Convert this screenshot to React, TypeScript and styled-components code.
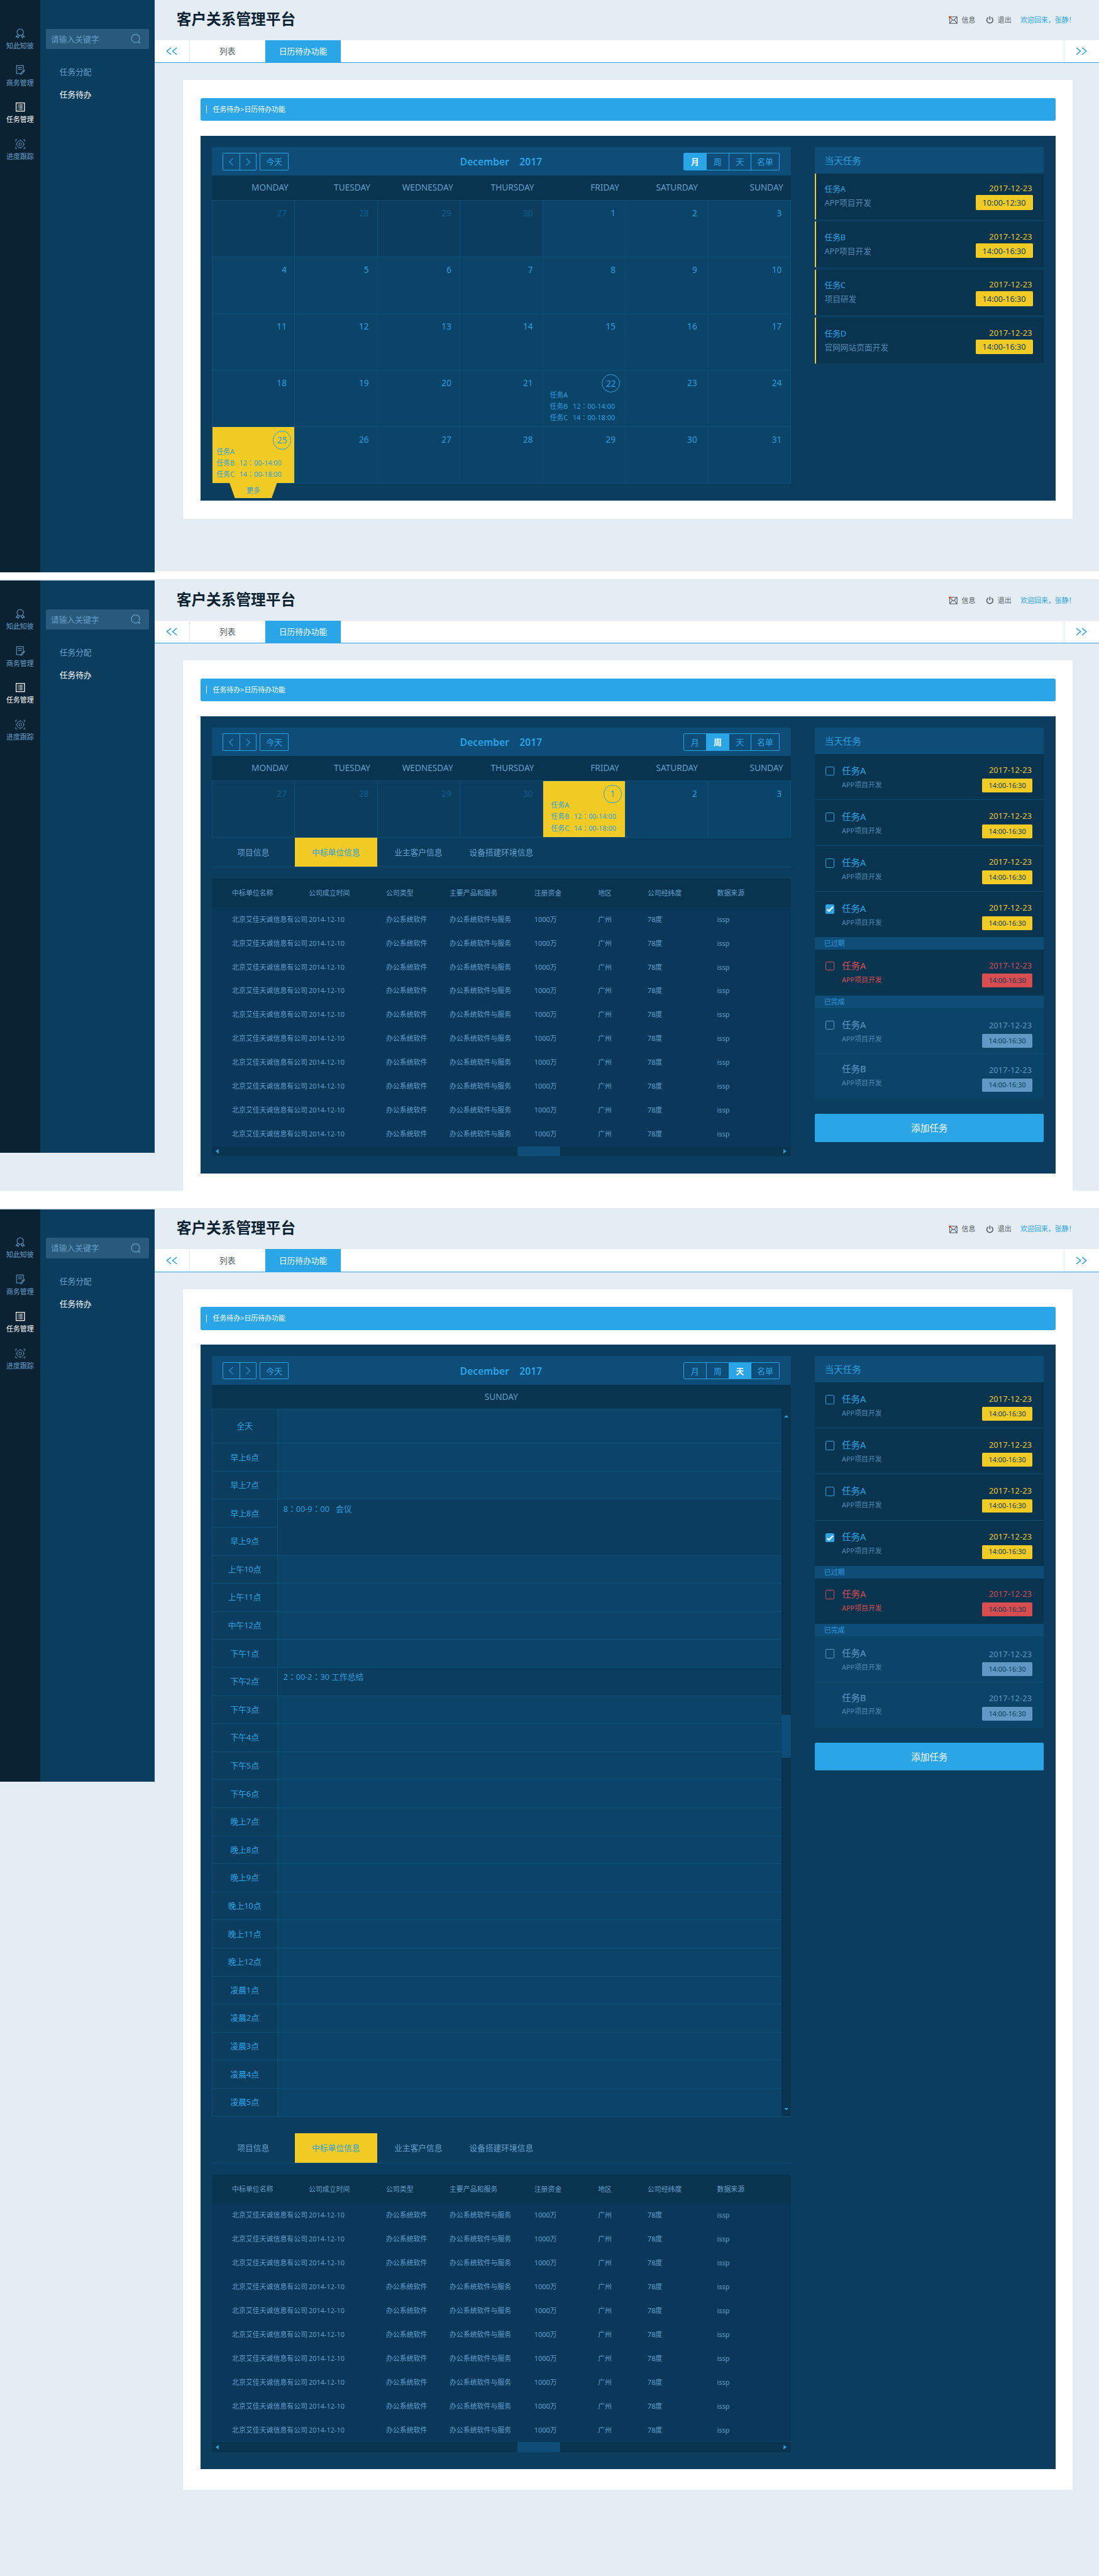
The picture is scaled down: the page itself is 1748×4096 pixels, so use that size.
import React from "react";
import styled, { createGlobalStyle, css } from "styled-components";

const c = {
  page: "#e4edf4",
  rail: "#0a2231",
  navy: "#0b3d5e",
  head: "#0d4d78",
  deep: "#09344f",
  cell: "#0b4469",
  line: "#0e4f7a",
  row: "#09385a",
  blue: "#2aa5e7",
  num: "#2a9fdf",
  muted: "#659fca",
  done: "#5f99c4",
  soft: "#5388b1",
  yellow: "#f3cb25",
  red: "#d94c4f",
};

const Global = createGlobalStyle`
  html, body { margin: 0; padding: 0; background: #fff; }
  * { box-sizing: border-box; }
  body { font-family: "Noto Sans", "Noto Sans CJK SC", sans-serif; }
`;

const Viewport = styled.div`
  width: 1748px;
  height: 4096px;
  overflow: hidden;
`;

const Board = styled.div`
  zoom: 0.9103;
  width: 1920.3px;
  height: 4500px;
  display: flex;
  flex-direction: column;
  background: #fff;
  font-size: 14px;
  line-height: 20px;
  white-space: nowrap;
`;

const Screen = styled.section<{ $h: number; $gap?: number; $top?: number }>`
  flex: none;
  display: flex;
  align-items: flex-start;
  height: ${(p) => p.$h}px;
  margin-top: ${(p) => p.$gap || 0}px;
  padding-top: ${(p) => p.$top || 0}px;
  background: ${c.page};
`;

/* ---------- left rail ---------- */

const Rail = styled.nav`
  width: 70px;
  height: 1000px;
  flex: none;
  background: ${c.rail};
  padding-top: 49px;
  display: flex;
  flex-direction: column;
`;

const RailItem = styled.div<{ $active?: boolean }>`
  height: 64.7px;
  display: flex;
  flex-direction: column;
  align-items: center;
  gap: 3px;
  font-size: 12px;
  line-height: 20px;
  color: ${(p) => (p.$active ? "#fff" : c.muted)};
  svg {
    display: block;
    height: 18px;
    width: 18px;
  }
`;

const Side = styled.aside`
  width: 200px;
  height: 1000px;
  flex: none;
  background: ${c.navy};
  padding: 50px 10px 0;
`;

const Search = styled.div`
  height: 36px;
  border-radius: 3px;
  background: #295a7b;
  color: ${c.muted};
  display: flex;
  align-items: center;
  justify-content: space-between;
  padding: 0 14px 0 9px;
`;

const Menu = styled.div`
  padding: 20px 0 0 24px;
`;

const MenuItem = styled.div<{ $active?: boolean }>`
  height: 39.6px;
  display: flex;
  align-items: center;
  color: ${(p) => (p.$active ? "#fff" : c.muted)};
`;

/* ---------- top ---------- */

const Main = styled.main`
  width: 1650px;
  flex: none;
`;

const Top = styled.header`
  height: 70px;
  display: flex;
  justify-content: space-between;
  padding: 0 41px 0 38.5px;
`;

const Title = styled.h1`
  margin: 13px 0 0;
  font-size: 26px;
  line-height: 40px;
  font-weight: 700;
  color: ${c.rail};
`;

const UserBar = styled.div`
  display: flex;
  align-items: center;
  height: 70px;
  font-size: 12px;
  color: #5b6166;
  svg {
    display: block;
    margin-right: 7px;
  }
`;

const UserItem = styled.span<{ $gap?: number; $blue?: boolean }>`
  display: flex;
  align-items: center;
  margin-left: ${(p) => p.$gap || 0}px;
  color: ${(p) => (p.$blue ? c.blue : "#5b6166")};
`;

const TabBar = styled.div`
  height: 40px;
  background: #fff;
  border-bottom: 1px solid ${c.blue};
  display: flex;
`;

const Tab = styled.div<{ $w: number; $active?: boolean; $grow?: boolean }>`
  width: ${(p) => p.$w}px;
  ${(p) => p.$grow && "flex: 1;"}
  display: flex;
  align-items: center;
  justify-content: center;
  color: ${(p) => (p.$active ? "#fff" : "#555b60")};
  background: ${(p) => (p.$active ? c.blue : "#fff")};
  border-right: 2px solid ${c.page};
  &:last-child {
    border-right: 0;
  }
`;

const Panel = styled.div<{ $h: number }>`
  margin: 30px 0 0 50px;
  width: 1554px;
  height: ${(p) => p.$h}px;
  background: #fff;
  padding: 31px 30px 0;
`;

const Crumb = styled.div`
  height: 40px;
  border-radius: 3px;
  background: ${c.blue};
  color: #fff;
  font-size: 12px;
  display: flex;
  align-items: center;
  padding-left: 10px;
  gap: 10px;
  &::before {
    content: "";
    width: 2px;
    height: 14px;
    background: #fff;
  }
`;

const Workspace = styled.div<{ $h: number }>`
  margin-top: 26px;
  height: ${(p) => p.$h}px;
  background: ${c.navy};
  padding: 20px 20px 0;
  display: flex;
  align-items: flex-start;
  gap: 42px;
`;

/* ---------- calendar ---------- */

const Calendar = styled.div`
  width: 1012px;
  flex: none;
`;

const CalHead = styled.div`
  height: 50px;
  background: ${c.head};
  display: grid;
  grid-template-columns: 1fr auto 1fr;
  align-items: center;
  padding: 1px 20px 0 19px;
  color: ${c.blue};
`;

const Month = styled.div`
  font-size: 17px;
  font-weight: 600;
  letter-spacing: 0.1px;
  word-spacing: 13.5px;
`;

const HeadLeft = styled.div`
  display: flex;
  gap: 6px;
`;

const Group = styled.div<{ $end?: boolean }>`
  display: flex;
  height: 30px;
  border: 1px solid ${c.blue};
  border-radius: 2px;
  ${(p) => p.$end && "justify-self: end;"}
`;

const GroupBtn = styled.div<{ $w: number; $active?: boolean }>`
  width: ${(p) => p.$w}px;
  display: flex;
  align-items: center;
  justify-content: center;
  border-left: 1px solid ${c.blue};
  &:first-child {
    border-left: 0;
  }
  ${(p) =>
    p.$active &&
    css`
      background: ${c.blue};
      color: #fff;
      font-weight: 600;
    `}
`;

const DowBar = styled.div<{ $single?: boolean }>`
  height: 42px;
  background: ${c.deep};
  display: ${(p) => (p.$single ? "flex" : "grid")};
  grid-template-columns: repeat(7, 1fr);
  align-items: center;
  justify-content: center;
  color: ${c.muted};
  font-size: 15px;
`;

const Dow = styled.div<{ $pad: number }>`
  text-align: right;
  padding-right: ${(p) => p.$pad}px;
`;

const Days = styled.div`
  display: grid;
  grid-template-columns: repeat(7, 1fr);
  grid-auto-rows: 99px;
  border-right: 1px solid ${c.line};
  border-bottom: 1px solid ${c.line};
`;

type Tone = "dim" | "normal" | "hot";

const Day = styled.div<{ $tone: Tone; $pad: number }>`
  position: relative;
  border-left: 1px solid ${c.line};
  border-top: 1px solid ${c.line};
  background: ${(p) => (p.$tone === "dim" ? c.navy : p.$tone === "hot" ? c.yellow : c.cell)};
  color: ${(p) => (p.$tone === "dim" ? "#105d92" : c.num)};
  padding: 12px ${(p) => p.$pad}px 0 0;
  text-align: right;
  font-size: 15px;
`;

const Circle = styled.span<{ $size: number }>`
  display: inline-flex;
  align-items: center;
  justify-content: center;
  width: ${(p) => p.$size}px;
  height: ${(p) => p.$size}px;
  margin: ${(p) => (22 - p.$size) / 2}px ${(p) => -(p.$size - 16) / 2}px;
  border: 1px solid ${c.num};
  border-radius: 50%;
`;

const DayTasks = styled.div<{ $pad: number }>`
  margin-top: -1.5px;
  padding-left: ${(p) => p.$pad}px;
  text-align: left;
  font-size: 12px;
  line-height: 20px;
  color: ${c.num};
`;

const DayTask = styled.div`
  display: grid;
  grid-template-columns: 40px auto;
`;

const Wide = styled.span`
  font-family: "Noto Sans CJK TC", sans-serif;
  line-height: 1;
`;

const More = styled.div`
  position: absolute;
  left: 30px;
  top: 97.5px;
  width: 83px;
  height: 27px;
  z-index: 1;
  background: ${c.yellow};
  clip-path: polygon(0 0, 100% 0, 88.5% 100%, 11.5% 100%);
  color: ${c.num};
  font-size: 12px;
  line-height: 26px;
  text-align: center;
`;

/* ---------- day view ---------- */

const DayView = styled.div`
  display: grid;
  grid-template-columns: 114px 1fr 16px;
  grid-template-rows: 59.5px repeat(24, 49px);
  border-bottom: 1px solid ${c.line};
`;

const Hour = styled.div`
  grid-column: 1;
  border-top: 1px solid ${c.line};
  border-left: 1px solid ${c.line};
  display: flex;
  align-items: center;
  justify-content: center;
  padding-bottom: 1px;
  color: ${c.blue};
`;

const Slot = styled.div<{ $row: number; $span: number; $busy: boolean }>`
  grid-column: 2;
  grid-row: ${(p) => p.$row} / span ${(p) => p.$span};
  border-top: 1px solid ${c.line};
  border-left: 1px solid ${c.line};
  background: ${(p) => (p.$busy ? c.navy : c.cell)};
  color: ${c.num};
  padding: 6px 0 0 10px;
  white-space: pre;
`;

const VScroll = styled.div`
  grid-column: 3;
  grid-row: 1 / -1;
  background: ${c.deep};
  display: flex;
  flex-direction: column;
  align-items: center;
  padding: 11px 0 10px;
`;

const VThumb = styled.div`
  margin: 520px 0 auto;
  width: 16px;
  height: 75px;
  border-radius: 1px;
  background: ${c.head};
`;

const Arrow = styled.i<{ $dir: "up" | "down" | "left" | "right" }>`
  display: block;
  flex: none;
  background: ${c.blue};
  ${(p) =>
    p.$dir === "up" || p.$dir === "down"
      ? "width: 8px; height: 4px;"
      : "width: 5px; height: 8px;"}
  clip-path: ${(p) =>
    ({
      up: "polygon(50% 0, 100% 100%, 0 100%)",
      down: "polygon(0 0, 100% 0, 50% 100%)",
      left: "polygon(100% 0, 100% 100%, 0 50%)",
      right: "polygon(0 0, 100% 50%, 0 100%)",
    })[p.$dir]};
`;

/* ---------- info table ---------- */

const InfoTabs = styled.div<{ $gap: number }>`
  margin-top: ${(p) => p.$gap}px;
  height: 52px;
  border-bottom: 2px solid ${c.head};
  display: flex;
  color: ${c.muted};
`;

const InfoTab = styled.div<{ $w: number; $active?: boolean }>`
  width: ${(p) => p.$w}px;
  display: flex;
  align-items: center;
  justify-content: center;
  ${(p) =>
    p.$active &&
    css`
      background: ${c.yellow};
      color: ${c.num};
    `}
`;

const Table = styled.div`
  margin-top: 20px;
  font-size: 12px;
  color: ${c.muted};
`;

const Row = styled.div<{ $head?: boolean }>`
  display: grid;
  grid-template-columns: 134px 135px 111px 148px 111.5px 86.5px 121.5px 1fr;
  align-items: center;
  padding-left: 35.5px;
  height: ${(p) => (p.$head ? 50.5 : 41.7)}px;
  background: ${(p) => (p.$head ? c.deep : c.row)};
  border-bottom: ${(p) => (p.$head ? "0" : `2px solid #0a3a5b`)};
`;

const HScroll = styled.div`
  height: 17px;
  background: ${c.deep};
  display: flex;
  align-items: center;
  padding: 0 8px 0 7px;
`;

const HThumb = styled.div`
  margin: 0 auto 0 522px;
  width: 75px;
  height: 17px;
  border-radius: 2px;
  background: ${c.head};
`;

/* ---------- tasks ---------- */

const Tasks = styled.div`
  width: 400px;
  flex: none;
`;

const TasksHead = styled.div`
  height: 46px;
  background: ${c.head};
  color: ${c.num};
  font-size: 16px;
  display: flex;
  align-items: center;
  padding-left: 17px;
`;

const Card = styled.div`
  height: 80px;
  margin-bottom: 4px;
  border-left: 3px solid ${c.yellow};
  background: ${c.deep};
  display: flex;
  justify-content: space-between;
  padding: 16px 19.5px 0 14.5px;
`;

const Name = styled.div<{ $color?: string; $size?: number }>`
  color: ${(p) => p.$color || c.blue};
  font-size: ${(p) => p.$size || 14}px;
  line-height: 24px;
`;

const Sub = styled.div<{ $color?: string; $size?: number }>`
  color: ${(p) => p.$color || c.soft};
  font-size: ${(p) => p.$size || 14}px;
  line-height: 24px;
`;

const When = styled.div`
  display: flex;
  flex-direction: column;
  align-items: flex-end;
`;

const DateText = styled.div<{ $color: string }>`
  color: ${(p) => p.$color};
  line-height: 20px;
  padding-right: 1px;
  letter-spacing: 0.2px;
`;

const Badge = styled.div<{ $bg: string; $small?: boolean }>`
  width: ${(p) => (p.$small ? 88 : 100)}px;
  height: ${(p) => (p.$small ? 24 : 26)}px;
  margin-top: ${(p) => (p.$small ? 5 : 2)}px;
  border-radius: 2px;
  background: ${(p) => p.$bg};
  color: ${c.navy};
  font-size: ${(p) => (p.$small ? 12 : 14)}px;
  display: flex;
  align-items: center;
  justify-content: center;
`;

const Item = styled.div<{ $done?: boolean; $line?: boolean }>`
  height: ${(p) => (p.$line ? 80.3 : 79.5)}px;
  background: ${(p) => (p.$done ? c.cell : c.deep)};
  border-bottom: ${(p) => (p.$line ? `1px solid ${c.head}` : "0")};
  display: grid;
  grid-template-columns: 29px 1fr auto;
  align-items: start;
  padding: 0 20px 0 18px;
`;

const Shift = styled.div<{ $y: number }>`
  padding-top: ${(p) => p.$y}px;
`;

const Box = styled.div<{ $color: string; $on?: boolean }>`
  width: 16px;
  height: 16px;
  border: 1px solid ${(p) => p.$color};
  border-radius: 2px;
  background: ${(p) => (p.$on ? p.$color : "transparent")};
  svg {
    display: block;
    width: 100%;
    height: 100%;
  }
`;

const Band = styled.div`
  height: 22px;
  background: ${c.head};
  color: ${c.num};
  font-size: 12px;
  line-height: 22px;
  padding-left: 16px;
`;

const AddButton = styled.div`
  margin-top: 25px;
  height: 49px;
  border-radius: 2px;
  background: ${c.blue};
  color: #fff;
  font-size: 16px;
  display: flex;
  align-items: center;
  justify-content: center;
`;

/* ---------- icons ---------- */

const stroke = { fill: "none", stroke: "currentColor", strokeWidth: 1.1 } as const;

const RibbonIcon = () => (
  <svg viewBox="0 0 18 18" {...stroke}>
    <circle cx="9" cy="6.8" r="5.6" />
    <path d="M5 10.8 1.6 15l2.6-.3.9 2.2 2.6-4.4M13 10.8l3.4 4.2-2.6-.3-.9 2.2-2.6-4.4" />
  </svg>
);

const DocIcon = () => (
  <svg viewBox="0 0 18 18" {...stroke}>
    <path d="M14.5 8V1.500H2.500v14h7M5 5h7M5 8h7" />
    <path d="M15.2 8.7l1.5 1.3-4.6 5.8-2.3 1 .7-2.5zM13.5 11l1.5 1.2" />
  </svg>
);

const ListIcon = () => (
  <svg viewBox="0 0 18 18" {...stroke}>
    <rect x="1.8" y="1.8" width="14.6" height="14.4" strokeWidth="1.4" />
    <path d="M4.8 5.3h1.4M7.2 5.3h6M4.8 7.8h1.4M7.2 7.8h6M4.8 10.3h1.4M7.2 10.3h6M4.8 12.8h1.4M7.2 12.8h6" />
  </svg>
);

const TargetIcon = () => (
  <svg viewBox="0 0 18 18" {...stroke} strokeWidth="1">
    <circle cx="9" cy="9" r="6" />
    <circle cx="9" cy="9" r="2.4" />
    <path d="M9 1v2M9 15v2M1 9h2M15 9h2M1 4.5V1.2h2.500M14.500 1.2h2.500v3.3M17 13.5v3.3h-2.500M3.500 16.8H1v-3.3" />
  </svg>
);

const SearchIcon = () => (
  <svg width="19" height="19" viewBox="0 0 19 19" fill="none" stroke={c.muted} strokeWidth="1.3">
    <circle cx="9.5" cy="9" r="7.3" />
    <path d="M14 14.5l3.4 2.7" strokeWidth="1.6" />
  </svg>
);

const MailIcon = () => (
  <svg width="16" height="15" viewBox="0 0 16 15" fill="none" stroke="#5b6166" strokeWidth="1.2">
    <rect x="1.6" y="2" width="13" height="11.4" />
    <path d="M2 2.5l6.1 6 6.1-6M2 13l4-5.5M14.2 13l-4-5.500" />
    <circle cx="2" cy="2.4" r="1.9" fill="#e8420b" stroke="none" />
  </svg>
);

const PowerIcon = () => (
  <svg width="14" height="15" viewBox="0 0 14 15" fill="none" stroke="#5b6166" strokeWidth="1.8">
    <path d="M4.2 3.1a5.3 5.3 0 1 0 5.6 0M7 .8v6.4" />
  </svg>
);

const Chevrons = ({ right }: { right?: boolean }) => (
  <svg width="20" height="14" viewBox="0 0 20 14" fill="none" stroke={c.blue} strokeWidth="1.6">
    <path d={right ? "M1 1l7.5 6L1 13M11 1l7.5 6L11 13" : "M9 1L1.5 7 9 13M19 1l-7.5 6 7.5 6"} />
  </svg>
);

const Chevron = ({ right }: { right?: boolean }) => (
  <svg width="8" height="14" viewBox="0 0 8 14" fill="none" stroke={c.blue} strokeWidth="1.1">
    <path d={right ? "M1 1l6 6-6 6" : "M7 1L1 7l6 6"} />
  </svg>
);

const Tick = () => (
  <svg viewBox="0 0 14 14" fill="none" stroke="#fff" strokeWidth="2.6">
    <path d="M1.8 7.6l3.2 3 7-7.2" />
  </svg>
);

/* ---------- parts ---------- */

const numberPads = [13.5, 14.5, 14.5, 16.5, 16.5, 18.5, 15];
const dowPads = [10.5, 12, 12, 15, 11, 18, 13.5];
const dows = ["MONDAY", "TUESDAY", "WEDNESDAY", "THURSDAY", "FRIDAY", "SATURDAY", "SUNDAY"];
const monthDays = [27, 28, 29, 30, ...Array.from({ length: 31 }, (_, i) => i + 1)];

const Colon = () => <Wide>：</Wide>;

const EntryList = ({ pad }: { pad: number }) => (
  <DayTasks $pad={pad}>
    <DayTask>
      <span>任务A</span>
    </DayTask>
    <DayTask>
      <span>任务B</span>
      <span>
        12
        <Colon />
        00-14:00
      </span>
    </DayTask>
    <DayTask>
      <span>任务C</span>
      <span>
        14
        <Colon />
        00-18:00
      </span>
    </DayTask>
  </DayTasks>
);

const CalendarHead = ({ view }: { view: string }) => (
  <CalHead>
    <HeadLeft>
      <Group>
        <GroupBtn $w={28.5}>
          <Chevron />
        </GroupBtn>
        <GroupBtn $w={28.5}>
          <Chevron right />
        </GroupBtn>
      </Group>
      <Group>
        <GroupBtn $w={48}>今天</GroupBtn>
      </Group>
    </HeadLeft>
    <Month>December 2017</Month>
    <Group $end>
      {["月", "周", "天", "名单"].map((v) => (
        <GroupBtn key={v} $w={v === "名单" ? 49 : 39} $active={v === view}>
          {v}
        </GroupBtn>
      ))}
    </Group>
  </CalHead>
);

const WeekDays = () => (
  <DowBar>
    {dows.map((d, i) => (
      <Dow key={d} $pad={dowPads[i]}>
        {d}
      </Dow>
    ))}
  </DowBar>
);

const MonthGrid = () => (
  <Days>
    {monthDays.map((n, i) => {
      const pad = numberPads[i % 7];
      const tone: Tone = i < 4 ? "dim" : n === 25 ? "hot" : "normal";
      if (i > 4 && (n === 22 || n === 25))
        return (
          <Day key={i} $tone={tone} $pad={pad}>
            <Circle $size={32}>{n}</Circle>
            <EntryList pad={n === 22 ? 12 : 7} />
            {n === 25 && <More>更多</More>}
          </Day>
        );
      return (
        <Day key={i} $tone={tone} $pad={pad}>
          {n}
        </Day>
      );
    })}
  </Days>
);

const WeekGrid = () => (
  <Days>
    {monthDays.slice(0, 7).map((n, i) => (
      <Day key={i} $tone={i < 4 ? "dim" : i === 4 ? "hot" : "normal"} $pad={i === 4 ? 13.5 : numberPads[i]}>
        {i === 4 ? (
          <>
            <Circle $size={31}>{n}</Circle>
            <EntryList pad={14} />
          </>
        ) : (
          n
        )}
      </Day>
    ))}
  </Days>
);

const hours = [
  "全天", "早上6点", "早上7点", "早上8点", "早上9点", "上午10点", "上午11点", "中午12点",
  "下午1点", "下午2点", "下午3点", "下午4点", "下午5点", "下午6点", "晚上7点", "晚上8点",
  "晚上9点", "晚上10点", "晚上11点", "晚上12点", "凌晨1点", "凌晨2点", "凌晨3点", "凌晨4点",
  "凌晨5点",
];

const DayGrid = () => (
  <DayView>
    {hours.map((h, i) => (
      <Hour key={h} style={{ gridRow: i + 1 }}>
        {h}
      </Hour>
    ))}
    {hours.map((h, i) =>
      i === 4 ? null : (
        <Slot key={h} $row={i + 1} $span={i === 3 ? 2 : 1} $busy={i === 3 || i === 9}>
          {i === 3 && (
            <>
              8<Colon />
              00-9
              <Colon />
              00{"   "}会议
            </>
          )}
          {i === 9 && (
            <>
              2<Colon />
              00-2
              <Colon />
              30 工作总结
            </>
          )}
        </Slot>
      )
    )}
    <VScroll>
      <Arrow $dir="up" />
      <VThumb />
      <Arrow $dir="down" />
    </VScroll>
  </DayView>
);

const tableHead = ["中标单位名称", "公司成立时间", "公司类型", "主要产品和服务", "注册资金", "地区", "公司经纬度", "数据来源"];
const tableRow = ["北京艾佳天诚信息有公司", "2014-12-10", "办公系统软件", "办公系统软件与服务", "1000万", "广州", "78度", "issp"];

const CompanyInfo = ({ gap }: { gap: number }) => (
  <>
    <InfoTabs $gap={gap}>
      <InfoTab $w={145}>项目信息</InfoTab>
      <InfoTab $w={144} $active>
        中标单位信息
      </InfoTab>
      <InfoTab $w={144}>业主客户信息</InfoTab>
      <InfoTab $w={146}>设备搭建环境信息</InfoTab>
    </InfoTabs>
    <Table>
      <Row $head>
        {tableHead.map((t) => (
          <span key={t}>{t}</span>
        ))}
      </Row>
      {Array.from({ length: 10 }, (_, r) => (
        <Row key={r}>
          {tableRow.map((t) => (
            <span key={t}>{t}</span>
          ))}
        </Row>
      ))}
      <HScroll>
        <Arrow $dir="left" />
        <HThumb />
        <Arrow $dir="right" />
      </HScroll>
    </Table>
  </>
);

type TaskProps = {
  name?: string;
  kind?: "open" | "late" | "done";
  box?: "off" | "on" | "none";
  line?: boolean;
  left?: number;
  right?: number;
};

const TaskItem = ({ name = "任务A", kind = "open", box = "off", line, left = 0, right = 0 }: TaskProps) => {
  const main = kind === "late" ? c.red : kind === "done" ? c.done : c.blue;
  const sub = kind === "late" ? c.red : c.soft;
  const date = kind === "late" ? c.red : kind === "done" ? c.done : c.yellow;
  return (
    <Item $done={kind === "done"} $line={line}>
      <Shift $y={22 + left}>
        {box !== "none" && (
          <Box $color={main} $on={box === "on"}>
            {box === "on" && <Tick />}
          </Box>
        )}
      </Shift>
      <Shift $y={17.5 + left}>
        <Name $color={main} $size={16}>
          {name}
        </Name>
        <Sub $color={sub} $size={12}>
          APP项目开发
        </Sub>
      </Shift>
      <Shift $y={18 + right}>
        <When>
          <DateText $color={date}>2017-12-23</DateText>
          <Badge $bg={date} $small>
            14:00-16:30
          </Badge>
        </When>
      </Shift>
    </Item>
  );
};

const TaskList = () => (
  <Tasks>
    <TasksHead>当天任务</TasksHead>
    <TaskItem line />
    <TaskItem line />
    <TaskItem line />
    <TaskItem box="on" />
    <Band>已过期</Band>
    <TaskItem kind="late" left={-1.8} right={-1.2} />
    <Band>已完成</Band>
    <TaskItem kind="done" line right={2} />
    <TaskItem kind="done" box="none" name="任务B" left={-3} right={-0.5} />
    <AddButton>添加任务</AddButton>
  </Tasks>
);

const cards = [
  ["任务A", "APP项目开发", "10:00-12:30"],
  ["任务B", "APP项目开发", "14:00-16:30"],
  ["任务C", "项目研发", "14:00-16:30"],
  ["任务D", "官网网站页面开发", "14:00-16:30"],
];

const TaskCards = () => (
  <Tasks>
    <TasksHead>当天任务</TasksHead>
    {cards.map(([n, s, t]) => (
      <Card key={n}>
        <div>
          <Name>{n}</Name>
          <Sub>{s}</Sub>
        </div>
        <When>
          <DateText $color={c.yellow}>2017-12-23</DateText>
          <Badge $bg={c.yellow}>{t}</Badge>
        </When>
      </Card>
    ))}
  </Tasks>
);

type FrameProps = {
  h: number;
  gap?: number;
  top?: number;
  panel: number;
  body: number;
  children: React.ReactNode;
};

const Frame = ({ h, gap, top, panel, body, children }: FrameProps) => (
  <Screen $h={h} $gap={gap} $top={top}>
    <Rail>
      <RailItem>
        <RibbonIcon />
        知此知彼
      </RailItem>
      <RailItem>
        <DocIcon />
        商务管理
      </RailItem>
      <RailItem $active>
        <ListIcon />
        任务管理
      </RailItem>
      <RailItem>
        <TargetIcon />
        进度跟踪
      </RailItem>
    </Rail>
    <Side>
      <Search>
        请输入关键字
        <SearchIcon />
      </Search>
      <Menu>
        <MenuItem>任务分配</MenuItem>
        <MenuItem $active>任务待办</MenuItem>
      </Menu>
    </Side>
    <Main>
      <Top>
        <Title>客户关系管理平台</Title>
        <UserBar>
          <UserItem>
            <MailIcon />
            信息
          </UserItem>
          <UserItem $gap={18}>
            <PowerIcon />
            退出
          </UserItem>
          <UserItem $gap={16} $blue>
            欢迎回来，张静！
          </UserItem>
        </UserBar>
      </Top>
      <TabBar>
        <Tab $w={62}>
          <Chevrons />
        </Tab>
        <Tab $w={132}>列表</Tab>
        <Tab $w={132} $active>
          日历待办功能
        </Tab>
        <Tab $w={0} $grow />
        <Tab $w={60}>
          <Chevrons right />
        </Tab>
      </TabBar>
      <Panel $h={panel}>
        <Crumb>任务待办&gt;日历待办功能</Crumb>
        <Workspace $h={body}>{children}</Workspace>
      </Panel>
    </Main>
  </Screen>
);

export default function App() {
  return (
    <>
      <Global />
      <Viewport>
        <Board>
          <Frame h={997} panel={766} body={637}>
            <Calendar>
              <CalendarHead view="月" />
              <WeekDays />
              <MonthGrid />
            </Calendar>
            <TaskCards />
          </Frame>
          <Frame h={1068} gap={15} top={2} panel={926} body={799}>
            <Calendar>
              <CalendarHead view="周" />
              <WeekDays />
              <WeekGrid />
              <CompanyInfo gap={0} />
            </Calendar>
            <TaskList />
          </Frame>
          <Frame h={2390} gap={30} top={2} panel={2097} body={1964}>
            <Calendar>
              <CalendarHead view="天" />
              <DowBar $single>SUNDAY</DowBar>
              <DayGrid />
              <CompanyInfo gap={29.5} />
            </Calendar>
            <TaskList />
          </Frame>
        </Board>
      </Viewport>
    </>
  );
}
